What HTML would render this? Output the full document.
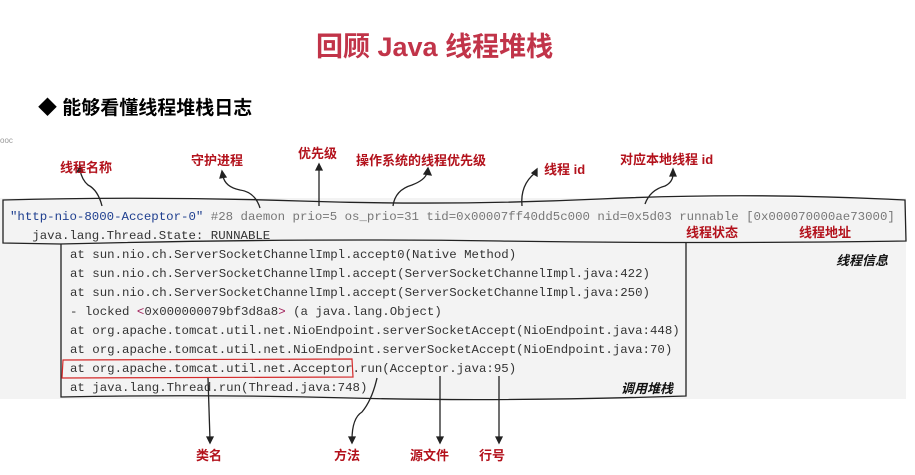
<!DOCTYPE html>
<html><head><meta charset="utf-8"><style>
body{margin:0;width:915px;height:475px;background:#fff;position:relative;overflow:hidden;font-family:"Liberation Sans","Noto Sans CJK SC",sans-serif}
.a{position:absolute;white-space:pre}
.m{font-family:"Liberation Mono","DejaVu Sans Mono",monospace;font-size:12.4px;color:#333;line-height:19px}
.r{color:#b3121c;font-weight:bold;font-size:13px}
.i{font-style:italic;font-weight:bold;font-size:13px;color:#111}
</style></head><body>
<div class="a" style="left:316px;top:25px;font-size:27px;font-weight:bold;color:#c13449">回顾 Java 线程堆栈</div>
<div class="a" style="left:38px;top:93px;font-size:19px;font-weight:bold;color:#000">◆ 能够看懂线程堆栈日志</div>
<div class="a" style="left:0;top:136px;font-size:8px;color:#999">ooc</div>
<div class="a" style="left:0;top:198px;width:906px;height:201px;background:#f3f3f3"></div>
<svg class="a" style="left:0;top:0" width="915" height="475" fill="none" stroke="#222" stroke-width="1.3">
<path d="M3 200 Q150 196 300 201 T600 199 T905 200 L906 241 Q700 244 500 241 T60 244 L3 243 Z"/>
<path d="M61 244 L61 397 Q200 394 350 398 T686 396 L686 243"/>
<path d="M63 360 L352 359 L353 377 L62 378 Z" stroke="#d42a2a" stroke-width="1.2"/>
<path d="M102 206 Q98 190 88 185 Q82 180 80 170" /><path d="M77 172 L80 166 L83 172Z" fill="#222"/>
<path d="M260 208 Q255 192 240 190 Q225 187 223 176"/><path d="M220 178 L222 171 L226 177Z" fill="#222"/>
<path d="M319 206 L319 167"/><path d="M316 170 L319 164 L322 170Z" fill="#222"/>
<path d="M393 206 Q395 190 412 185 Q425 180 427 173"/><path d="M424 174 L428 168 L431 175Z" fill="#222"/>
<path d="M522 206 Q520 185 535 173"/><path d="M532 173 L537 169 L537 176Z" fill="#222"/>
<path d="M645 204 Q650 190 665 186 Q673 182 673 174"/><path d="M670 176 L673 169 L676 176Z" fill="#222"/>
<path d="M208 378 L210 440"/><path d="M207 437 L210 443 L213 437Z" fill="#222"/>
<path d="M377 378 Q372 400 362 412 Q352 418 352 440"/><path d="M349 437 L352 443 L355 437Z" fill="#222"/>
<path d="M440 376 L440 440"/><path d="M437 437 L440 443 L443 437Z" fill="#222"/>
<path d="M499 376 L499 440"/><path d="M496 437 L499 443 L502 437Z" fill="#222"/>
</svg>
<div class="a r" style="left:60px;top:157px">线程名称</div>
<div class="a r" style="left:191px;top:150px">守护进程</div>
<div class="a r" style="left:298px;top:143px">优先级</div>
<div class="a r" style="left:356px;top:150px">操作系统的线程优先级</div>
<div class="a r" style="left:544px;top:159px">线程 id</div>
<div class="a r" style="left:620px;top:149px">对应本地线程 id</div>
<div class="a r" style="left:686px;top:222px">线程状态</div>
<div class="a r" style="left:799px;top:222px">线程地址</div>
<div class="a i" style="left:836px;top:250px">线程信息</div>
<div class="a i" style="left:621px;top:378px">调用堆栈</div>
<div class="a r" style="left:196px;top:445px">类名</div>
<div class="a r" style="left:334px;top:445px">方法</div>
<div class="a r" style="left:410px;top:445px">源文件</div>
<div class="a r" style="left:479px;top:445px">行号</div>
<div class="a m" style="left:10px;top:208px"><span style="color:#1f3f8f">"http-nio-8000-Acceptor-0"</span><span style="color:#777"> #28 daemon prio=5 os_prio=31 tid=0x00007ff40dd5c000 nid=0x5d03 runnable [0x000070000ae73000]</span>
   java.lang.Thread.State: RUNNABLE</div>
<div class="a m" style="left:70px;top:246px">at sun.nio.ch.ServerSocketChannelImpl.accept0(Native Method)
at sun.nio.ch.ServerSocketChannelImpl.accept(ServerSocketChannelImpl.java:422)
at sun.nio.ch.ServerSocketChannelImpl.accept(ServerSocketChannelImpl.java:250)
- locked <span style="color:#a0205a">&lt;</span>0x000000079bf3d8a8<span style="color:#a0205a">&gt;</span> (a java.lang.Object)
at org.apache.tomcat.util.net.NioEndpoint.serverSocketAccept(NioEndpoint.java:448)
at org.apache.tomcat.util.net.NioEndpoint.serverSocketAccept(NioEndpoint.java:70)
at org.apache.tomcat.util.net.Acceptor.run(Acceptor.java:95)
at java.lang.Thread.run(Thread.java:748)</div>
</body></html>
